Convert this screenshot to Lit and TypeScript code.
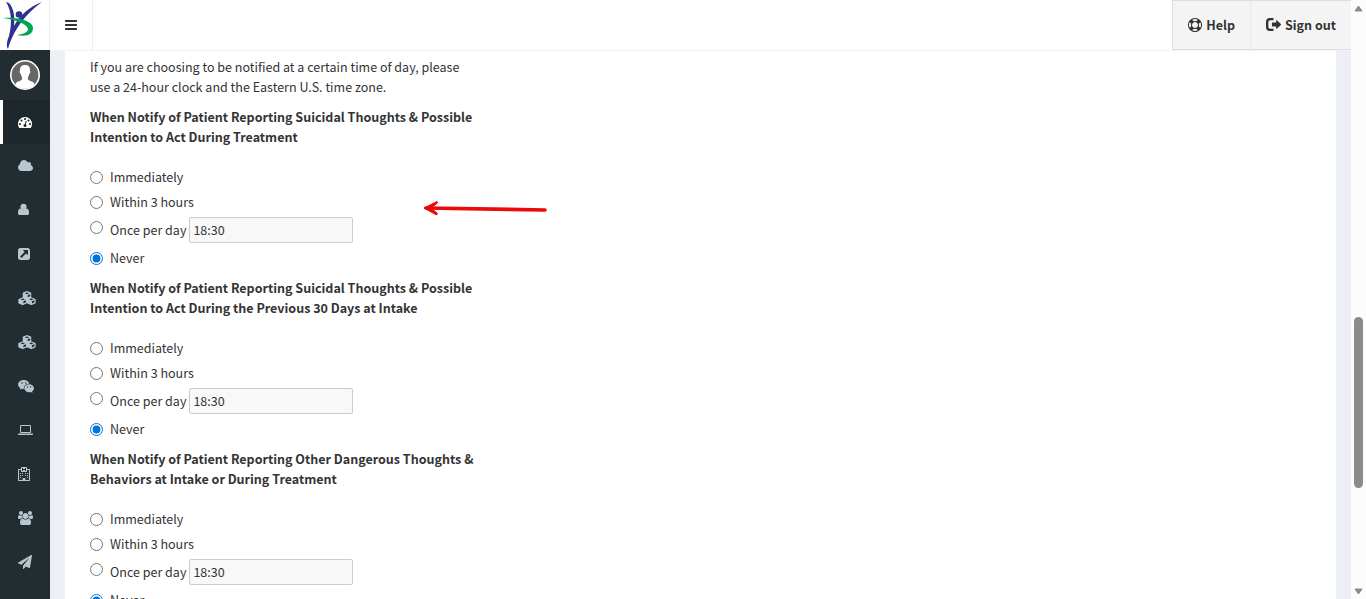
import { LitElement, html, css, svg } from "lit";
import { customElement, property } from "lit/decorators.js";

interface Icon {
  w: number;
  path: string;
}

// Glyphs are drawn on a 1792-unit em; w is the advance width of each one.
const ICONS: Record<string, Icon> = {
  bars: { w: 1792, path: "M1664 1344v128q0 26-19 45t-45 19h-1408q-26 0-45-19t-19-45v-128q0-26 19-45t45-19h1408q26 0 45 19t19 45zm0-512v128q0 26-19 45t-45 19h-1408q-26 0-45-19t-19-45v-128q0-26 19-45t45-19h1408q26 0 45 19t19 45zm0-512v128q0 26-19 45t-45 19h-1408q-26 0-45-19t-19-45v-128q0-26 19-45t45-19h1408q26 0 45 19t19 45z" },
  dashboard: { w: 1792, path: "M384 1152q0-53-37.5-90.5t-90.5-37.5-90.5 37.5-37.5 90.5 37.5 90.5 90.5 37.5 90.5-37.5 37.5-90.5zm192-448q0-53-37.5-90.5t-90.5-37.5-90.5 37.5-37.5 90.5 37.5 90.5 90.5 37.5 90.5-37.5 37.5-90.5zm428 481l101-382q6-26-7.5-48.5t-38.5-29.5-48 6.5-30 39.5l-101 382q-60 5-107 43.5t-63 98.5q-20 77 20 146t117 89 146-20 89-117q16-60-6-117t-72-91zm660-33q0-53-37.5-90.5t-90.5-37.5-90.5 37.5-37.5 90.5 37.5 90.5 90.5 37.5 90.5-37.5 37.5-90.5zm-640-640q0-53-37.5-90.5t-90.5-37.5-90.5 37.5-37.5 90.5 37.5 90.5 90.5 37.5 90.5-37.5 37.5-90.5zm448 192q0-53-37.5-90.5t-90.5-37.5-90.5 37.5-37.5 90.5 37.5 90.5 90.5 37.5 90.5-37.5 37.5-90.5zm320 448q0 261-141 483-19 29-54 29h-1402q-35 0-54-29-141-221-141-483 0-182 71-348t191-286 286-191 348-71 348 71 286 191 191 286 71 348z" },
  cloud: { w: 1920, path: "M1920 1152q0 159-112.5 271.5t-271.5 112.5h-1088q-185 0-316.5-131.5t-131.5-316.5q0-132 71-241.5t187-163.5q-2-28-2-43 0-212 150-362t362-150q158 0 286.5 88t187.5 230q70-62 166-62 106 0 181 75t75 181q0 75-41 138 129 30 213 134.5t84 239.5z" },
  user: { w: 1408, path: "M1408 1271q0 109-62.5 187t-150.500 78h-982q-88 0-150.500-78t-62.500-187q0-85 8.500-160.500t31.500-152 58.500-131 94-89 134.500-34.500q131 128 377 128t377-128q76 0 134.500 34.500t94 89 58.500 131 31.500 152 8.500 160.500zM1100 472q0 159-112.500 271.500t-283.500 112.500-283.500-112.500-112.500-271.500 112.500-271.500 283.500-112.500 283.500 112.500 112.500 271.500z" },
  link: { w: 1536, path: "M1280 928v-480q0-26-19-45t-45-19h-480q-42 0-59 39-17 41 14 70l144 144-534 534q-19 19-19 45t19 45l102 102q19 19 45 19t45-19l534-534 144 144q18 19 45 19 12 0 25-5 39-17 39-59zm256-512v960q0 119-84.5 203.5t-203.5 84.5h-960q-119 0-203.5-84.5t-84.5-203.5v-960q0-119 84.5-203.5t203.5-84.5h960q119 0 203.5 84.5t84.5 203.5z" },
  cubes: { w: 2304, path: "M1152 0L1650 200Q1690 220 1690 270V790L2210 1010Q2260 1040 2260 1090V1510Q2260 1560 2210 1590L1760 1790Q1700 1810 1650 1790L1152 1560L660 1790Q600 1810 550 1790L90 1590Q44 1560 44 1510V1090Q44 1040 90 1010L610 790V270Q610 220 660 200ZM1152 180L860 300L1152 415L1440 300ZM1240 550V800L1560 670V420ZM610 950L320 1070L610 1180L900 1070ZM690 1320V1590L1020 1440V1180ZM1700 950L1410 1070L1700 1180L1990 1070ZM1780 1320V1590L2110 1440V1180Z" },
  chat: { w: 2048, path: "M760 130C1110 130 1390 320 1450 600C1060 590 740 850 740 1180L750 1280Q610 1290 480 1250L250 1370L310 1170C120 1050 10 890 10 700C10 380 340 130 760 130ZM520 410a90 90 0 1 0 1 0ZM1010 410a90 90 0 1 0 1 0ZM1420 680C1770 680 2040 910 2040 1180C2040 1340 1940 1480 1810 1580L1860 1750L1670 1650Q1550 1690 1420 1690C1070 1690 810 1460 810 1180C810 900 1070 680 1420 680ZM1220 940a75 75 0 1 0 1 0ZM1610 940a75 75 0 1 0 1 0Z" },
  laptop: { w: 1920, path: "M416 1280q-66 0-113-47t-47-113v-704q0-66 47-113t113-47h1088q66 0 113 47t47 113v704q0 66-47 113t-113 47h-1088zm-32-864v704q0 13 9.5 22.5t22.5 9.5h1088q13 0 22.5-9.5t9.5-22.5v-704q0-13-9.5-22.5t-22.5-9.5h-1088q-13 0-22.5 9.5t-9.5 22.5zm1376 928h160v96q0 40-47 68t-113 28h-1600q-66 0-113-28t-47-68v-96h1760zm-720 96q16 0 16-16t-16-16h-160q-16 0-16 16t16 16h160z" },
  hospital: { w: 1536, path: "M384 256V64Q384 0 448 0H1088Q1152 0 1152 64V256H1472Q1536 256 1536 320V1728Q1536 1792 1472 1792H64Q0 1792 0 1728V320Q0 256 64 256ZM512 128V512H640V384H896V512H1024V128H896V256H640V128ZM128 384V1664H576V1472Q576 1408 640 1408H896Q960 1408 960 1472V1664H1408V384H1152V576Q1152 640 1088 640H448Q384 640 384 576V384ZM256 768h128v128h-128zM512 768h128v128h-128zM896 768h128v128h-128zM1152 768h128v128h-128zM256 1024h128v128h-128zM512 1024h128v128h-128zM896 1024h128v128h-128zM1152 1024h128v128h-128zM256 1280h128v128h-128zM1152 1280h128v128h-128z" },
  users: { w: 1920, path: "M593 896q-162 5-265 128h-134q-82 0-138-40.5t-56-118.5q0-353 124-353 6 0 43.5 21t97.5 42.5 119 21.5q67 0 133-23-5 37-5 66 0 139 81 256zm1071 637q0 120-73 189.5t-194 69.5h-874q-121 0-194-69.5t-73-189.5q0-53 3.5-103.5t14-109 26.5-108.5 43-97.5 62-81 85.5-53.5 111.5-20q10 0 43 21.5t73 48 107 48 135 21.5 135-21.5 107-48 73-48 43-21.5q61 0 111.5 20t85.5 53.5 62 81 43 97.5 26.5 108.5 14 109 3.5 103.5zm-1024-1277q0 106-75 181t-181 75-181-75-75-181 75-181 181-75 181 75 75 181zm704 384q0 159-112.5 271.5t-271.5 112.5-271.5-112.5-112.5-271.5 112.5-271.5 271.5-112.5 271.5 112.5 112.5 271.5zm576 225q0 78-56 118.5t-138 40.5h-134q-103-123-265-128 81-117 81-256 0-29-5-66 66 23 133 23 59 0 119-21.5t97.5-42.5 43.5-21q124 0 124 353zm-128-609q0 106-75 181t-181 75-181-75-75-181 75-181 181-75 181 75 75 181z" },
  plane: { w: 1792, path: "M1764 11q33 24 27 64l-256 1536q-5 29-32 45-14 8-31 8-11 0-24-5l-453-185-242 295q-18 23-49 23-13 0-22-4-19-7-30.5-23.5t-11.5-36.5v-349l864-1059-1069 925-395-162q-37-14-40-55-2-40 32-59l1664-960q15-9 32-9 20 0 36 11z" },
  ring: { w: 1792, path: "M896 0q182 0 348 71t286 191 191 286 71 348-71 348-191 286-286 191-348 71-348-71-286-191-191-286-71-348 71-348 191-286 286-191 348-71zm0 128q-190 0-361 90l194 194q82-28 167-28t167 28l194-194q-171-90-361-90zm-678 1129l194-194q-28-82-28-167t28-167l-194-194q-90 171-90 361t90 361zm678 407q190 0 361-90l-194-194q-82 28-167 28t-167-28l-194 194q171 90 361 90zm0-384q159 0 271.5-112.5t112.5-271.5-112.5-271.5-271.5-112.5-271.5 112.5-112.5 271.5 112.5 271.5 271.5 112.5zm484-217l194 194q90-171 90-361t-90-361l-194 194q28 82 28 167t-28 167z" },
  signout: { w: 1920, path: "M960 0V300H520Q300 300 300 520V1140Q300 1360 520 1360H960V1660H500Q0 1660 0 1160V500Q0 0 500 0ZM1300 330Q1300 230 1380 300L1900 780Q1940 830 1900 880L1380 1360Q1300 1430 1300 1330V1080H820Q760 1080 760 1020V640Q760 580 820 580H1300Z" },
};

const icon = (name: string, size = 14) => {
  const { w, path } = ICONS[name];
  return html`<svg class="icon" aria-hidden="true" height=${size} width=${Math.round((size * w) / 1792)} viewBox="0 0 ${w} 1792">
    ${svg`<path fill="currentColor" fill-rule="evenodd" d=${path}></path>`}
  </svg>`;
};

const MENU = [
  ["dashboard", "Dashboard"],
  ["cloud", "Cloud"],
  ["user", "Profile"],
  ["link", "Links"],
  ["cubes", "Modules"],
  ["cubes", "Packages"],
  ["chat", "Messages"],
  ["laptop", "Devices"],
  ["hospital", "Clinics"],
  ["users", "Groups"],
  ["plane", "Send"],
];

const QUESTIONS = [
  "When Notify of Patient Reporting Suicidal Thoughts & Possible Intention to Act During Treatment",
  "When Notify of Patient Reporting Suicidal Thoughts & Possible Intention to Act During the Previous 30 Days at Intake",
  "When Notify of Patient Reporting Other Dangerous Thoughts & Behaviors at Intake or During Treatment",
];

@customElement("notify-group")
export class NotifyGroup extends LitElement {
  @property() heading = "";

  static styles = css`
    :host { display: block; margin-bottom: 10px; }
    fieldset { border: 0; margin: 0; padding: 0; min-width: 0; }
    legend { padding: 0; margin-bottom: 20px; font-weight: 700; }
    .options { display: flex; flex-direction: column; gap: 5px; }
    .option { display: flex; align-items: flex-start; }
    .option label { padding-left: 7px; }
    .timed label { align-self: center; padding-right: 3px; }
    input[type="radio"] { width: 13px; height: 13px; margin: 4px 0 0; flex: none; accent-color: #0075d9; }
    input[type="text"] {
      box-sizing: border-box;
      width: 164px;
      height: 26px;
      padding: 0 3px 2px;
      border: 1px solid #cccccc;
      border-radius: 2px;
      background: #f8f8f8;
      color: inherit;
      font: inherit;
    }
  `;

  render() {
    return html`<fieldset>
      <legend>${this.heading}</legend>
      <div class="options">
        <div class="option"><input type="radio" name="when" id="now" /><label for="now">Immediately</label></div>
        <div class="option"><input type="radio" name="when" id="soon" /><label for="soon">Within 3 hours</label></div>
        <div class="option timed">
          <input type="radio" name="when" id="daily" /><label for="daily">Once per day</label>
          <input type="text" aria-label="Time of day" .value=${"18:30"} />
        </div>
        <div class="option"><input type="radio" name="when" id="never" checked /><label for="never">Never</label></div>
      </div>
    </fieldset>`;
  }
}

@customElement("app-root")
export class AppRoot extends LitElement {
  static styles = css`
    :host {
      display: flex;
      height: 100vh;
      overflow: hidden;
      background: #ecf0f5;
      color: #333333;
      font: 14px/20px "Source Sans Pro", "Noto Sans CJK SC", sans-serif;
      /* Keeps fallback fonts at the x-height of Source Sans Pro. */
      font-size-adjust: 0.486;
    }
    .icon { display: block; flex: none; }
    .side { flex: none; width: 50px; background: #222d32; color: #b8c7ce; }
    .logo { display: block; box-sizing: border-box; height: 50px; background: #ffffff; border-right: 1px solid #eeeeee; }
    .logo svg, .avatar svg { display: block; }
    .avatar { display: block; padding: 10px; }
    .menu { list-style: none; margin: 0; padding: 0; }
    .menu a {
      display: flex;
      align-items: center;
      height: 44px;
      padding-left: 15px;
      border-left: 3px solid transparent;
      color: inherit;
    }
    .menu a.active { background: #1e282c; border-color: #ffffff; color: #ffffff; }
    .column { flex: 1; min-width: 0; display: flex; flex-direction: column; }
    .top { flex: none; display: flex; justify-content: space-between; height: 50px; background: #ffffff; border-bottom: 1px solid #f2f2f2; }
    .toggle {
      width: 43px;
      padding: 0 0 0 14px;
      border: 0;
      border-right: 1px solid #eeeeee;
      background: none;
      color: #333333;
    }
    .actions { display: flex; box-sizing: border-box; border: solid #dddddd; border-width: 1px 0 1px 1px; background: #f4f4f4; font-weight: 700; }
    .actions a { display: flex; align-items: center; gap: 4px; padding: 0 15px; color: #333333; text-decoration: none; }
    .actions a + a { border-left: 1px solid #eaeaea; }
    .content { flex: 1; min-height: 0; margin: 0 15px; padding: 6px 25px 0; background: #ffffff; overflow: hidden; }
    .form { max-width: 390px; }
    .intro { margin: 0 0 10px; }
    .arrow { position: absolute; left: 422px; top: 199px; }
    .scroll { flex: none; width: 15px; display: flex; flex-direction: column; align-items: center; justify-content: space-between; background: #fcfcfc; padding: 4px 0 3px; box-sizing: border-box; }
    .rail { flex: 1; display: grid; grid-template-rows: 304fr 171fr 99fr; width: 9px; }
    .thumb { grid-row: 2; border-radius: 5px; background: #8b8b8b; }
  `;

  render() {
    return html`
      <aside class="side">
        <a class="logo" href="#" aria-label="Home">
          <svg width="49" height="50" viewBox="0 0 49 50">
            <path fill="#2e3192" d="M6 2L9 3C14 9 15 17 14 26C20 15 29 7 42 2C30 11 15 25 8 49C6 46 7 41 9 36C12 24 12 11 6 2Z" />
            <circle cx="19" cy="14.500" r="3.300" fill="#2e3192" />
            <path fill="#00a651" d="M3 18C18 17 33 21 33 28C33 35 26 37 17 35C24 34 28 32 28 29C27 24 16 20 3 18Z" />
          </svg>
        </a>
        <a class="avatar" href="#" aria-label="Account">
          <svg width="30" height="30" viewBox="0 0 30 30">
            <circle cx="15" cy="15" r="14.2" fill="#666666" stroke="#ffffff" stroke-width="1.6" />
            <path fill="#ffffff" d="M15 5C18.5 5 20.2 7 20 10.5C20.6 11.5 20.2 13.4 19.2 14C18.9 16 18 17 17.8 18C17.8 20.3 19.5 20.5 22 21.6C23.5 22.2 24.2 23 24.4 25A14 14 0 0 1 5.600 25C5.800 23 6.500 22.200 8 21.600C10.500 20.500 12.200 20.300 12.200 18C12 17 11.100 16 10.800 14C9.800 13.400 9.400 11.500 10 10.500C9.800 7 11.500 5 15 5Z" />
          </svg>
        </a>
        <ul class="menu">
          ${MENU.map(
            ([glyph, label], i) => html`<li>
              <a class=${i === 0 ? "active" : ""} href="#" aria-label=${label}>${icon(glyph)}</a>
            </li>`
          )}
        </ul>
      </aside>
      <div class="column">
        <header class="top">
          <button class="toggle" type="button" aria-label="Toggle navigation">${icon("bars")}</button>
          <nav class="actions">
            <a href="#">${icon("ring")}Help</a>
            <a href="#">${icon("signout")}Sign out</a>
          </nav>
        </header>
        <main class="content">
          <div class="form">
            <p class="intro">If you are choosing to be notified at a certain time of day, please use a 24-hour clock and the Eastern U.S. time zone.</p>
            ${QUESTIONS.map((q) => html`<notify-group .heading=${q}></notify-group>`)}
          </div>
        </main>
      </div>
      <svg class="arrow" width="128" height="20" viewBox="0 0 128 20" aria-hidden="true">
        <path d="M4 9L123 11" stroke="#ea0a0a" stroke-width="3.6" stroke-linecap="round" />
        <path d="M2 9L15 2.500L15.500 4L9 9L15.500 14.500L14.500 16Z" fill="#ea0a0a" stroke="#ea0a0a" stroke-linejoin="round" />
      </svg>
      <div class="scroll" aria-hidden="true">
        <svg width="9" height="9" viewBox="0 0 9 9"><path d="M4.500 2L8 7H1Z" fill="#8b8b8b" stroke="#8b8b8b" stroke-linejoin="round" /></svg>
        <div class="rail"><div class="thumb"></div></div>
        <svg width="9" height="9" viewBox="0 0 9 9"><path d="M4.500 7L8 2H1Z" fill="#8b8b8b" stroke="#8b8b8b" stroke-linejoin="round" /></svg>
      </div>
    `;
  }
}
